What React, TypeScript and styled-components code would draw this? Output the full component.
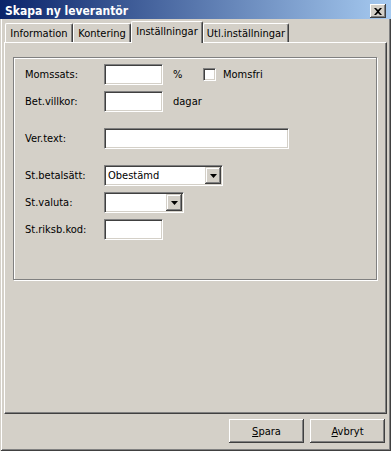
import React from "react";
import styled, { createGlobalStyle } from "styled-components";

const GlobalStyle = createGlobalStyle`
  html, body {
    margin: 0;
    padding: 0;
    background: #d4d0c8;
  }
  body {
    font-family: "DejaVu Sans Condensed", "DejaVu Sans", Tahoma, sans-serif;
    font-size: 11px;
    color: #000;
  }
`;

const Window = styled.div`
  width: 391px;
  height: 451px;
  box-sizing: border-box;
  background: #d4d0c8;
  display: flex;
  flex-direction: column;
  box-shadow: inset 1px 1px #d4d0c8, inset -1px -1px #404040,
    inset 2px 2px #ffffff, inset -2px -2px #808080;
`;

const TitleBar = styled.div`
  height: 19px;
  flex-shrink: 0;
  display: flex;
  align-items: flex-start;
  padding: 0 5px;
  background: linear-gradient(to right, #0a246a, #a6caf0);
`;

const Title = styled.div`
  color: #fff;
  font-weight: bold;
  font-size: 12px;
  line-height: 14px;
  padding-top: 4px;
`;

const CloseButton = styled.div`
  margin-left: auto;
  margin-top: 4px;
  width: 16px;
  height: 14px;
  box-sizing: border-box;
  background: #d4d0c8;
  display: flex;
  align-items: center;
  justify-content: center;
  box-shadow: inset -1px -1px #404040, inset 1px 1px #ffffff,
    inset -2px -2px #808080;
`;

const Body = styled.div`
  flex: 1;
  display: flex;
  flex-direction: column;
  padding: 2px 4px 8px 4px;
  min-height: 0;
`;

const TabStrip = styled.div`
  height: 21px;
  flex-shrink: 0;
  display: flex;
  align-items: flex-end;
  padding-left: 1px;
`;

const Tab = styled.div<{ $width: number; $active?: boolean }>`
  position: relative;
  z-index: ${(p) => (p.$active ? 1 : 0)};
  width: ${(p) => p.$width}px;
  height: ${(p) => (p.$active ? 22 : 19)}px;
  margin-bottom: ${(p) => (p.$active ? -1 : 0)}px;
  box-sizing: border-box;
  background: #d4d0c8;
  border-top: 1px solid #ffffff;
  border-left: 1px solid #ffffff;
  border-right: 1px solid #404040;
  border-radius: 2px 2px 0 0;
  box-shadow: inset -1px 0 #808080;
  text-align: center;
  line-height: 13px;
  padding-top: 3px;
  white-space: nowrap;
`;

const TabPanel = styled.div`
  flex: 1;
  box-sizing: border-box;
  border-top: 1px solid #ffffff;
  border-left: 1px solid #ffffff;
  border-right: 1px solid #404040;
  border-bottom: 1px solid #404040;
  box-shadow: inset -1px -1px #808080;
  padding: 14px 0 0 8px;
`;

const GroupBox = styled.div`
  width: 364px;
  height: 223px;
  box-sizing: border-box;
  border: 1px solid #808080;
  box-shadow: 1px 1px #ffffff, inset 1px 1px #ffffff;
  padding: 6px 0 0 11px;
`;

const Row = styled.div<{ $gap: number }>`
  display: flex;
  align-items: center;
  height: 21px;
  margin-top: ${(p) => p.$gap}px;
`;

const Label = styled.div`
  width: 79px;
  flex-shrink: 0;
  white-space: nowrap;
`;

const TextBox = styled.input<{ $width: number }>`
  width: ${(p) => p.$width}px;
  height: 21px;
  box-sizing: border-box;
  margin: 0;
  padding: 0 2px;
  font: inherit;
  background: #ffffff;
  border: 1px solid;
  border-color: #808080 #ffffff #ffffff #808080;
  box-shadow: inset 1px 1px #404040, inset -1px -1px #d4d0c8;
  outline: none;
`;

const Combo = styled.div<{ $width: number }>`
  width: ${(p) => p.$width}px;
  height: 21px;
  box-sizing: border-box;
  background: #ffffff;
  border: 1px solid;
  border-color: #808080 #ffffff #ffffff #808080;
  box-shadow: inset 1px 1px #404040, inset -1px -1px #d4d0c8;
  padding: 1px;
  display: flex;
  align-items: center;
`;

const ComboText = styled.div`
  flex: 1;
  padding-left: 2px;
  white-space: nowrap;
  overflow: hidden;
`;

const ComboButton = styled.div`
  width: 16px;
  height: 17px;
  flex-shrink: 0;
  box-sizing: border-box;
  background: #d4d0c8;
  display: flex;
  align-items: center;
  justify-content: center;
  box-shadow: inset -1px -1px #404040, inset 1px 1px #d4d0c8,
    inset -2px -2px #808080, inset 2px 2px #ffffff;
`;

const Unit = styled.div<{ $width?: number }>`
  margin-left: 10px;
  width: ${(p) => (p.$width ? `${p.$width}px` : "auto")};
`;

const CheckBox = styled.div`
  width: 13px;
  height: 13px;
  box-sizing: border-box;
  background: #ffffff;
  border: 1px solid;
  border-color: #808080 #ffffff #ffffff #808080;
  box-shadow: inset 1px 1px #404040, inset -1px -1px #d4d0c8;
`;

const CheckLabel = styled.div`
  margin-left: 7px;
`;

const ButtonRow = styled.div`
  margin-top: 5px;
  display: flex;
  justify-content: flex-end;
  gap: 6px;
  padding-right: 2px;
  flex-shrink: 0;
`;

const PushButton = styled.div`
  width: 75px;
  height: 24px;
  box-sizing: border-box;
  background: #d4d0c8;
  display: flex;
  align-items: center;
  justify-content: center;
  box-shadow: inset -1px -1px #404040, inset 1px 1px #ffffff,
    inset -2px -2px #808080;
`;

const DownArrow = () => (
  <svg width="7" height="4" viewBox="0 0 7 4">
    <path d="M0 0h7L3.5 4z" fill="#000" />
  </svg>
);

const CloseGlyph = () => (
  <svg width="8" height="7" viewBox="0 0 8 7">
    <path
      d="M0 0h2l2 2 2-2h2L5 3.5 8 7H6L4 5 2 7H0l3-3.5z"
      fill="#000"
    />
  </svg>
);

const tabs = [
  { label: "Information", width: 68 },
  { label: "Kontering", width: 58 },
  { label: "Inställningar", width: 72, active: true },
  { label: "Utl.inställningar", width: 86 },
];

export default function App() {
  return (
    <>
      <GlobalStyle />
      <Window>
        <TitleBar>
          <Title>Skapa ny leverantör</Title>
          <CloseButton>
            <CloseGlyph />
          </CloseButton>
        </TitleBar>
        <Body>
          <TabStrip>
            {tabs.map((t) => (
              <Tab key={t.label} $width={t.width} $active={t.active}>
                {t.label}
              </Tab>
            ))}
          </TabStrip>
          <TabPanel>
            <GroupBox>
              <Row $gap={0}>
                <Label>Momssats:</Label>
                <TextBox $width={59} />
                <Unit $width={30}>%</Unit>
                <CheckBox />
                <CheckLabel>Momsfri</CheckLabel>
              </Row>
              <Row $gap={6}>
                <Label>Bet.villkor:</Label>
                <TextBox $width={59} />
                <Unit>dagar</Unit>
              </Row>
              <Row $gap={16}>
                <Label>Ver.text:</Label>
                <TextBox $width={185} />
              </Row>
              <Row $gap={16}>
                <Label>St.betalsätt:</Label>
                <Combo $width={119}>
                  <ComboText>Obestämd</ComboText>
                  <ComboButton>
                    <DownArrow />
                  </ComboButton>
                </Combo>
              </Row>
              <Row $gap={6}>
                <Label>St.valuta:</Label>
                <Combo $width={80}>
                  <ComboText />
                  <ComboButton>
                    <DownArrow />
                  </ComboButton>
                </Combo>
              </Row>
              <Row $gap={6}>
                <Label>St.riksb.kod:</Label>
                <TextBox $width={59} />
              </Row>
            </GroupBox>
          </TabPanel>
          <ButtonRow>
            <PushButton>
              <span>
                <u>S</u>para
              </span>
            </PushButton>
            <PushButton>
              <span>
                <u>A</u>vbryt
              </span>
            </PushButton>
          </ButtonRow>
        </Body>
      </Window>
    </>
  );
}
